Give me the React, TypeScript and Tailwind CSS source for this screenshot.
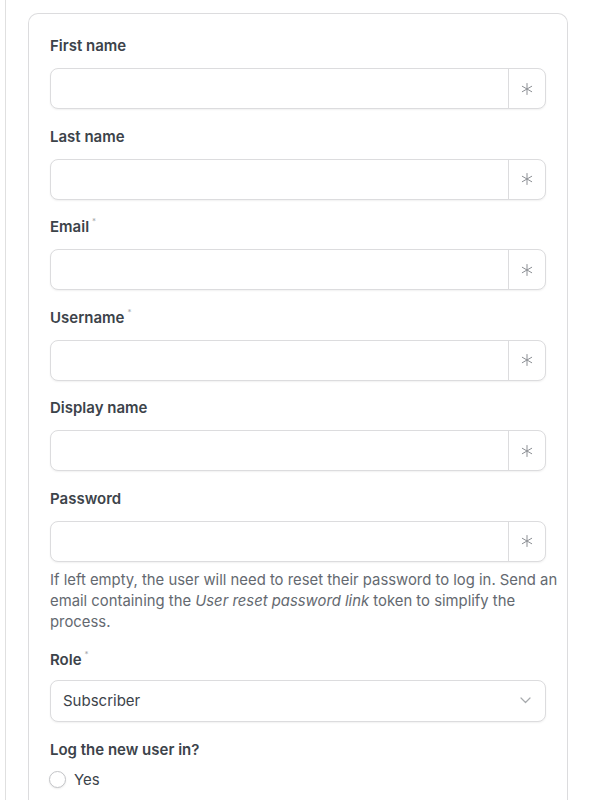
import { useState } from "react";

type FieldProps = {
  label: string;
  required?: boolean;
  type?: string;
};

function Label({ text, required }: { text: string; required?: boolean }) {
  return (
    <div className="flex h-5 items-center text-[15px] font-semibold leading-5 text-[#3c434a]">
      <span>{text}</span>
      {required && (
        <span className="ml-[3px] -mt-[12px] text-[8px] font-normal leading-none text-[#a7aaad]">
          *
        </span>
      )}
    </div>
  );
}

function AsteriskField({ label, required, type = "text" }: FieldProps) {
  return (
    <div className="flex flex-col">
      <Label text={label} required={required} />
      <div className="mt-3 flex h-[41px] overflow-hidden rounded-lg border border-[#dcdcde] bg-white shadow-[0_1px_2px_rgba(0,0,0,0.06)]">
        <input
          type={type}
          className="min-w-0 flex-1 px-3 text-[15px] text-[#3c434a] outline-none"
        />
        <div className="flex w-[37px] items-center justify-center border-l border-[#dcdcde] text-[#8c8f94]">
          <svg width="12" height="12" viewBox="0 0 12 12" fill="none" stroke="currentColor" strokeWidth="1" strokeLinecap="round">
            <path d="M6 0.5v11" />
            <path d="M1.3 3.3l9.4 5.4" />
            <path d="M1.3 8.7l9.4-5.4" />
          </svg>
        </div>
      </div>
    </div>
  );
}

export default function App() {
  const [login, setLogin] = useState(false);

  return (
    <div className="min-h-screen bg-white font-['Inter',sans-serif]">
      <div className="flex">
        <div className="ml-[5px] w-px self-stretch bg-[#e0e0e0]" />
        <div className="ml-[22px] mt-[13px] h-[820px] w-[540px] rounded-t-[10px] border border-b-0 border-[#dcdcde] px-[21px] pt-[22px]">
          <div className="flex flex-col gap-[17.5px]">
            <AsteriskField label="First name" />
            <AsteriskField label="Last name" />
            <AsteriskField label="Email" required type="email" />
            <AsteriskField label="Username" required />
            <AsteriskField label="Display name" />
            <div className="flex flex-col">
              <AsteriskField label="Password" type="password" />
              <p className="-mr-4 mt-2 text-[14.85px] leading-[21px] text-[#646970]">
                If left empty, the user will need to reset their password to log in. Send an
                email containing the <em>User reset password link</em> token to simplify the
                process.
              </p>
            </div>
            <div className="flex flex-col">
              <Label text="Role" required />
              <div className="relative mt-[10px] flex h-[42px] items-center rounded-lg border border-[#dcdcde] bg-white px-3 shadow-[0_1px_2px_rgba(0,0,0,0.06)]">
                <span className="text-[15px] text-[#3c434a]">Subscriber</span>
                <svg className="absolute right-[14px] top-[16px]" width="11" height="7" viewBox="0 0 11 7" fill="none" stroke="#a7aaad" strokeWidth="1.2" strokeLinecap="round" strokeLinejoin="round">
                  <path d="M1 1l4.5 4.5L10 1" />
                </svg>
              </div>
            </div>
            <div className="flex flex-col">
              <Label text="Log the new user in?" />
              <label className="mt-[9px] flex cursor-pointer items-center gap-[8px]">
                <span
                  onClick={() => setLogin(!login)}
                  className="-ml-px flex h-[17px] w-[17px] items-center justify-center rounded-full border border-[#c3c4c7] bg-white shadow-[0_1px_2px_rgba(0,0,0,0.08)]"
                >
                  {login && <span className="h-[7px] w-[7px] rounded-full bg-[#3c434a]" />}
                </span>
                <span className="text-[15px] text-[#3c434a]">Yes</span>
              </label>
            </div>
          </div>
        </div>
      </div>
    </div>
  );
}
